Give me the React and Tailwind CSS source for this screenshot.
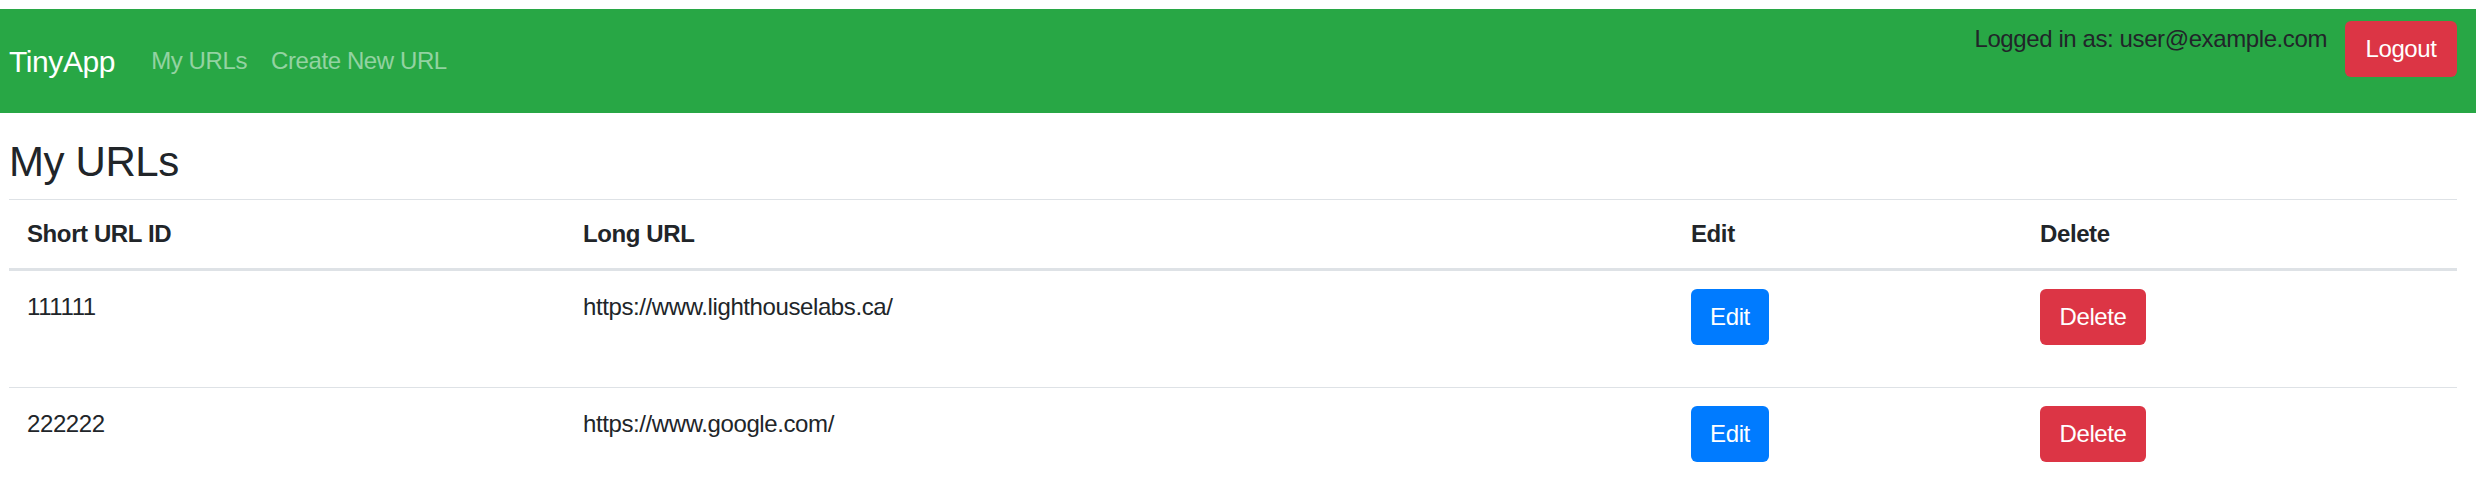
import React from "react";

const rows = [
  { id: "111111", url: "https://www.lighthouselabs.ca/" },
  { id: "222222", url: "https://www.google.com/" },
];

export default function App() {
  return (
    <div
      className="pt-[9px] bg-white text-[#212529] text-[24px] leading-[36px] tracking-[-0.4px]"
      style={{ fontFamily: '"Segoe UI", "Liberation Sans", Arial, sans-serif' }}
    >
      <nav className="h-[104px] bg-[#28a745] flex items-center justify-between pl-[9px] pr-[19px]">
        <div className="flex items-center">
          <a className="text-[30px] leading-[45px] text-white mr-[24px] py-[7px]">TinyApp</a>
          <a className="px-[12px] text-white/50">My URLs</a>
          <a className="px-[12px] text-white/50">Create New URL</a>
        </div>
        <div className="h-[80px] flex items-start gap-[18px]">
          <span className="leading-[36px] text-[#212529]">Logged in as: user@example.com</span>
          <button className="w-[112px] h-[56px] rounded-[6px] bg-[#dc3545] text-white flex items-center justify-center">
            Logout
          </button>
        </div>
      </nav>
      <main className="pl-[9px] pr-[19px]">
        <h3 className="text-[42px] leading-[50px] mt-[24px] mb-[12px] font-normal">My URLs</h3>
        <table className="w-full border-collapse table-fixed">
          <colgroup>
            <col className="w-[556px]" />
            <col className="w-[1108px]" />
            <col className="w-[349px]" />
            <col className="w-[435px]" />
          </colgroup>
          <thead>
            <tr className="border-t border-[#dee2e6] border-b-[3px] border-b-[#dee2e6]">
              <th className="text-left font-bold px-[18px] py-[16px] align-bottom">Short URL ID</th>
              <th className="text-left font-bold px-[18px] py-[16px] align-bottom">Long URL</th>
              <th className="text-left font-bold px-[18px] py-[16px] align-bottom">Edit</th>
              <th className="text-left font-bold px-[18px] py-[16px] align-bottom">Delete</th>
            </tr>
          </thead>
          <tbody>
            {rows.map((r) => (
              <tr key={r.id} className="border-t border-[#dee2e6]">
                <td className="p-[18px] align-top">{r.id}</td>
                <td className="p-[18px] align-top">{r.url}</td>
                <td className="p-[18px] align-top">
                  <div className="mb-[24px]">
                    <button className="w-[78px] h-[56px] rounded-[6px] bg-[#007bff] text-white flex items-center justify-center">
                      Edit
                    </button>
                  </div>
                </td>
                <td className="p-[18px] align-top">
                  <div className="mb-[24px]">
                    <button className="w-[106px] h-[56px] rounded-[6px] bg-[#dc3545] text-white flex items-center justify-center">
                      Delete
                    </button>
                  </div>
                </td>
              </tr>
            ))}
          </tbody>
        </table>
      </main>
    </div>
  );
}
